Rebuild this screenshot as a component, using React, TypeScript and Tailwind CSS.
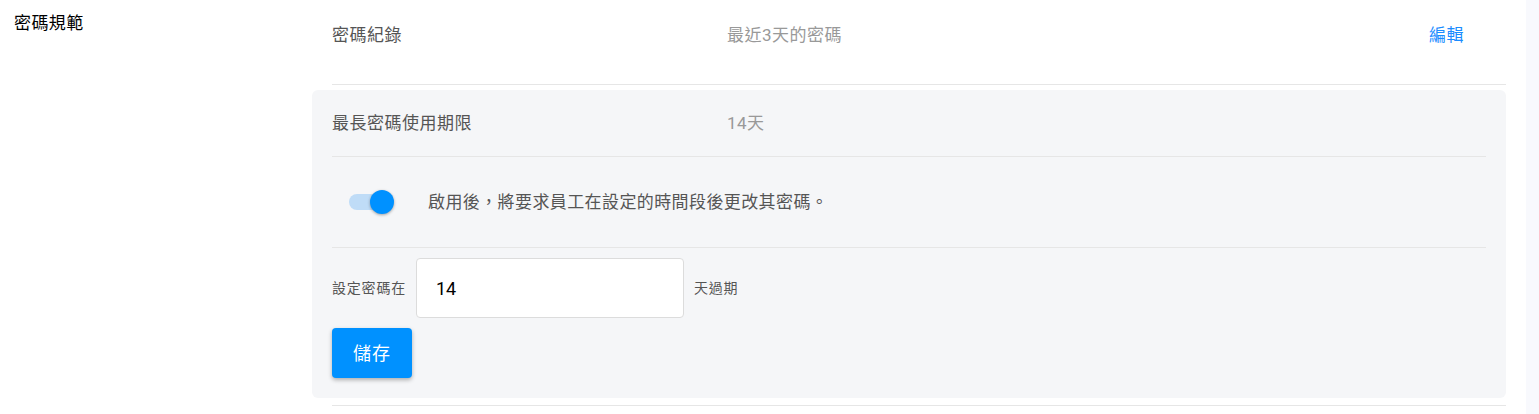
import React, { FC, useState } from "react";

const font = { fontFamily: "Roboto, 'Noto Sans CJK TC', 'Noto Sans', sans-serif" };

const Toggle: FC<{ on: boolean; onChange: () => void }> = ({ on, onChange }) => {
  return (
    <button
      type="button"
      onClick={onChange}
      className="relative flex h-[24px] w-[45px] shrink-0 items-center"
    >
      <span
        className={`h-[16px] w-[34px] rounded-full ${on ? "bg-[#bfdcf7]" : "bg-[#c4c4c4]"}`}
      />
      <span
        className={`absolute top-0 h-[24px] w-[24px] rounded-full shadow-[0_1px_3px_rgba(0,0,0,0.35)] ${
          on ? "left-[21px] bg-[#0091ff]" : "left-0 bg-white"
        }`}
      />
    </button>
  );
};

export default function App() {
  const [enabled, setEnabled] = useState<boolean>(true);
  const [days, setDays] = useState<string>("14");

  return (
    <div className="flex h-[414px] w-full bg-white" style={font}>
      <div className="flex flex-1">
        {/* left label column */}
        <div className="w-[312px] shrink-0 pl-[14px] pt-[11px] text-[17px] leading-[24px] tracking-[0.4px] text-black">
          密碼規範
        </div>

        {/* right content column */}
        <div className="mr-[20px] flex flex-1 flex-col">
          <div className="ml-[20px] flex h-[85px] border-b border-[#e6e6e6] pt-[23px] text-[17px] leading-[24px] tracking-[0.5px]">
            <div className="w-[395px] text-[#555]">密碼紀錄</div>
            <div className="flex-1 text-[#999]">最近3天的密碼</div>
            <a className="pr-[42px] text-[#1a8cff]" href="#">
              編輯
            </a>
          </div>

          <div className="mt-[5px] rounded-md bg-[#f5f6f8] px-5 pb-[20px]">
            <div className="flex h-[67px] border-b border-[#e6e6e6] pt-[21px] text-[17px] leading-[24px] tracking-[0.5px]">
              <div className="w-[395px] text-[#555]">最長密碼使用期限</div>
              <div className="text-[#999]">14天</div>
            </div>

            <div className="flex h-[91px] items-center border-b border-[#e6e6e6] pl-[17px]">
              <Toggle on={enabled} onChange={() => setEnabled(!enabled)} />
              <span className="ml-[34px] text-[17px] leading-[24px] tracking-[0.4px] text-[#555]">
                啟用後，將要求員工在設定的時間段後更改其密碼。
              </span>
            </div>

            <div className="mt-[10px] flex items-center gap-[10px]">
              <span className="text-[14px] tracking-[0.8px] text-[#555]">設定密碼在</span>
              <input
                value={days}
                onChange={(e) => setDays(e.target.value)}
                className="h-[60px] w-[268px] rounded-[4px] border border-[#dcdcdc] bg-white px-[19px] text-[18px] text-black outline-none"
              />
              <span className="text-[14px] tracking-[0.8px] text-[#555]">天過期</span>
            </div>

            <button
              type="button"
              className="mt-[10px] h-[50px] w-[80px] rounded-[4px] bg-[#0091ff] text-[18px] tracking-[1px] text-white shadow-[0_2px_4px_rgba(0,0,0,0.3)]"
            >
              儲存
            </button>
          </div>

          <div className="ml-[20px] mt-[7px] border-b border-[#e6e6e6]" />
        </div>
      </div>

      {/* scrollbar strip */}
      <div className="w-[13px] shrink-0 bg-[#f8f9fd]" />
    </div>
  );
}
